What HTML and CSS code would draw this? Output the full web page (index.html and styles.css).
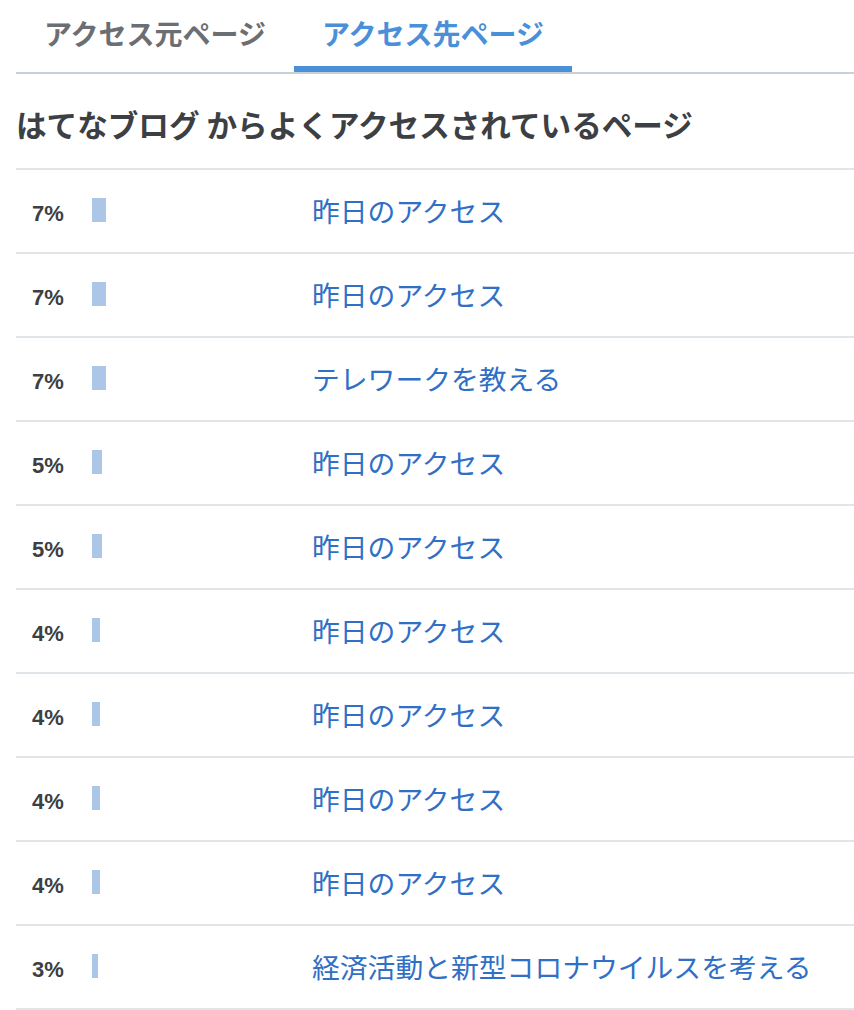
FILE: index.html
```html
<!DOCTYPE html>
<html lang="ja">
<head>
<meta charset="utf-8">
<title>アクセス先ページ</title>
<link rel="stylesheet" href="styles.css">
</head>
<body>
<div class="wrap">
  <nav class="tabs">
    <a class="tab">アクセス元ページ</a>
    <a class="tab active">アクセス先ページ</a>
  </nav>
  <h2 class="heading">はてなブログ からよくアクセスされているページ</h2>
  <ul class="rows">
    <li class="row"><span class="pct">7%</span><span class="bar-cell"><span class="bar" style="width:14px"></span></span><a class="title">昨日のアクセス</a></li>
    <li class="row"><span class="pct">7%</span><span class="bar-cell"><span class="bar" style="width:14px"></span></span><a class="title">昨日のアクセス</a></li>
    <li class="row"><span class="pct">7%</span><span class="bar-cell"><span class="bar" style="width:14px"></span></span><a class="title">テレワークを教える</a></li>
    <li class="row"><span class="pct">5%</span><span class="bar-cell"><span class="bar" style="width:10px"></span></span><a class="title">昨日のアクセス</a></li>
    <li class="row"><span class="pct">5%</span><span class="bar-cell"><span class="bar" style="width:10px"></span></span><a class="title">昨日のアクセス</a></li>
    <li class="row"><span class="pct">4%</span><span class="bar-cell"><span class="bar" style="width:8px"></span></span><a class="title">昨日のアクセス</a></li>
    <li class="row"><span class="pct">4%</span><span class="bar-cell"><span class="bar" style="width:8px"></span></span><a class="title">昨日のアクセス</a></li>
    <li class="row"><span class="pct">4%</span><span class="bar-cell"><span class="bar" style="width:8px"></span></span><a class="title">昨日のアクセス</a></li>
    <li class="row"><span class="pct">4%</span><span class="bar-cell"><span class="bar" style="width:8px"></span></span><a class="title">昨日のアクセス</a></li>
    <li class="row"><span class="pct">3%</span><span class="bar-cell"><span class="bar" style="width:6px"></span></span><a class="title">経済活動と新型コロナウイルスを考える</a></li>
  </ul>
</div>
</body>
</html>
```

FILE: styles.css
```css
html, body {
  margin: 0;
  padding: 0;
  background: #ffffff;
}

body {
  font-family: "Noto Sans CJK JP", "Noto Sans", sans-serif;
  color: #3c3f43;
}

.wrap {
  margin-left: 16px;
}

.tabs {
  display: flex;
  border-bottom: 2px solid #c8d1d9;
  height: 72px;
}

.tab {
  box-sizing: border-box;
  width: 278px;
  height: 72px;
  display: flex;
  align-items: center;
  justify-content: center;
  padding-bottom: 6px;
  font-size: 28px;
  font-weight: 700;
  color: #6b6e72;
  text-decoration: none;
}

.tab.active {
  color: #4a90d9;
  border-bottom: 6px solid #4a90d9;
  padding-bottom: 0;
}

.heading {
  margin: 0;
  padding: 28px 0 21px;
  font-size: 30.6px;
  line-height: 45px;
  font-weight: 700;
  color: #3c3f43;
  border-bottom: 2px solid #e0e5ea;
}

.rows {
  list-style: none;
  margin: 0;
  padding: 0;
}

.row {
  display: flex;
  align-items: center;
  height: 82px;
  border-bottom: 2px solid #e0e5ea;
}

.pct {
  box-sizing: border-box;
  width: 76px;
  padding-left: 16px;
  padding-top: 6px;
  font-family: "Liberation Sans", Arial, sans-serif;
  font-size: 22px;
  line-height: 24px;
  font-weight: 700;
  color: #3c3f43;
}

.bar-cell {
  width: 220px;
  display: flex;
}

.bar {
  display: block;
  height: 24px;
  margin-bottom: 2px;
  background: #abc6e6;
}

.title {
  font-size: 27.8px;
  line-height: 42px;
  margin-bottom: 3px;
  color: #2f6fc6;
  text-decoration: none;
}
```
